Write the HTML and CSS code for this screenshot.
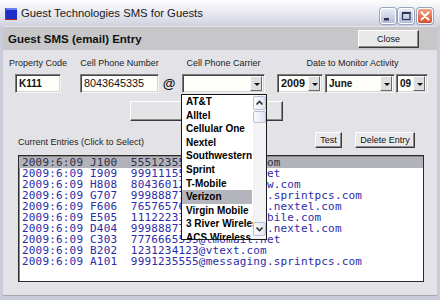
FILE: index.html
```html
<!DOCTYPE html>
<html lang="en">
<head>
  <meta charset="UTF-8" />
  <title>Guest Technologies SMS for Guests</title>
  <link rel="stylesheet" href="styles.css">
</head>
<body>
  <div class="window">
    <div class="titlebar">
      <svg class="app-icon" width="12" height="12" viewBox="0 0 12 12">
        <rect x="0" y="0" width="12" height="12" fill="#c02020"/>
        <rect x="1" y="0" width="11" height="11" fill="#1a2fc8"/>
        <rect x="1" y="0" width="11" height="2" fill="#6a7ef0"/>
      </svg>
      <span class="title">Guest Technologies SMS for Guests</span>
      <div class="caption-btns">
        <span class="cap-btn">
          <svg width="14" height="14" viewBox="0 0 14 14"><rect x="3" y="9" width="5" height="2.5" fill="#2c3450"/></svg>
        </span>
        <span class="cap-btn">
          <svg width="14" height="14" viewBox="0 0 14 14"><rect x="3.5" y="3.5" width="7.5" height="7" fill="none" stroke="#2c3450" stroke-width="1.2"/><rect x="3" y="3" width="8.5" height="2" fill="#2c3450"/></svg>
        </span>
        <span class="cap-btn cap-close">
          <svg width="14" height="14" viewBox="0 0 14 14"><path d="M3.5 3.5 L10.5 10.5 M10.5 3.5 L3.5 10.5" stroke="#fff" stroke-width="2" stroke-linecap="round"/></svg>
        </span>
      </div>
    </div>

    <div class="panel">
      <div class="header">
        <span class="header-title">Guest SMS (email) Entry</span>
        <button class="btn btn-close">Close</button>
      </div>

      <div class="fields">
        <div class="field f-code">
          <label>Property Code</label>
          <div class="input bold">K111</div>
        </div>
        <div class="field f-phone">
          <label>Cell Phone Number</label>
          <div class="input">8043645335</div>
        </div>
        <div class="at">@</div>
        <div class="field f-carrier">
          <label>Cell Phone Carrier</label>
          <div class="select"><span class="val"></span><span class="arrow"></span></div>
        </div>
        <div class="field f-date">
          <label>Date to Monitor Activity</label>
          <div class="selects">
            <div class="select s-year"><span class="val">2009</span><span class="arrow"></span></div>
            <div class="select s-month"><span class="val">June</span><span class="arrow"></span></div>
            <div class="select s-day"><span class="val">09</span><span class="arrow"></span></div>
          </div>
        </div>
      </div>

      <div class="action-row">
        <button class="btn btn-wide"></button>
      </div>

      <div class="entries-bar">
        <span class="entries-label">Current Entries (Click to Select)</span>
        <div class="entry-btns">
          <button class="btn btn-test">Test</button>
          <button class="btn btn-delete">Delete Entry</button>
        </div>
      </div>

      <div class="listbox">
        <div class="row selected">2009:6:09 J100  5551235555@qwestmp.com</div>
        <div class="row">2009:6:09 I909  9991115555@tmomail.net</div>
        <div class="row">2009:6:09 H808  8043601212@mobile.vzw.com</div>
        <div class="row">2009:6:09 G707  9998887777@messaging.sprintpcs.com</div>
        <div class="row">2009:6:09 F606  7657657657@messaging.nextel.com</div>
        <div class="row">2009:6:09 E505  1112223333@myboostmobile.com</div>
        <div class="row">2009:6:09 D404  9998887777@messaging.nextel.com</div>
        <div class="row">2009:6:09 C303  7776665555@tmomail.net</div>
        <div class="row">2009:6:09 B202  1231234123@vtext.com</div>
        <div class="row">2009:6:09 A101  9991235555@messaging.sprintpcs.com</div>
      </div>
    </div>

    <!-- open carrier list, lies over the form -->
    <div class="dropdown">
      <ul class="dd-items">
        <li>AT&amp;T</li>
        <li>Alltel</li>
        <li>Cellular One</li>
        <li>Nextel</li>
        <li>Southwestern</li>
        <li>Sprint</li>
        <li>T-Mobile</li>
        <li class="active">Verizon</li>
        <li>Virgin Mobile</li>
        <li>3 River Wireless</li>
        <li>ACS Wireless</li>
      </ul>
      <div class="dd-scroll">
        <span class="sb-btn">
          <svg width="11" height="12" viewBox="0 0 11 12"><polyline points="2.5,7.5 5.5,4.5 8.5,7.5" fill="none" stroke="#303030" stroke-width="1.6"/></svg>
        </span>
        <span class="sb-thumb"></span>
        <span class="sb-btn sb-down">
          <svg width="11" height="12" viewBox="0 0 11 12"><polyline points="2.5,4.5 5.5,7.5 8.5,4.5" fill="none" stroke="#303030" stroke-width="1.6"/></svg>
        </span>
      </div>
    </div>
  </div>
</body>
</html>
```

FILE: styles.css
```css
body {
  margin: 0;
  font-family: "Liberation Sans", Arial, sans-serif;
  background-color: #e3e3e7;
  color: #222;
}
.window {
  position: relative;
  width: 440px;
  height: 300px;
  box-sizing: border-box;
  background: #c9ccd8;
  padding: 0 3px 4px;
  display: flex;
  flex-direction: column;
}
.titlebar {
  height: 26px;
  margin: 0 -3px;
  padding: 0 7px 0 5px;
  display: flex;
  align-items: center;
  background: linear-gradient(#fdfdfe, #e6e7ee 55%, #cfd2de);
}
.app-icon {
  margin-top: 1px;
}
.title {
  margin-left: 4px;
  font-size: 11.3px;
  color: #1a1a1a;
}
.caption-btns {
  margin-left: auto;
  align-self: flex-end;
  margin-bottom: 2px;
  display: flex;
  gap: 2px;
}
.cap-btn {
  width: 14px;
  height: 14px;
  border: 1px solid #fff;
  border-radius: 3px;
  background: linear-gradient(#e9ecf8, #b3bbd8);
  box-shadow: 0 0 0 1px #9aa2c0;
  display: flex;
}
.cap-close {
  margin-left: 1px;
  background: linear-gradient(#f3a080, #d4502e);
}
.panel {
  flex: 1;
  background: #e3e3e7;
  display: flex;
  flex-direction: column;
  border-bottom: 1px solid #a4a6b4;
}
.header {
  height: 23px;
  margin-top: 1px;
  padding: 0 18px 0 5px;
  background: #c7c7c9;
  display: flex;
  align-items: center;
  justify-content: space-between;
}
.header-title {
  font-weight: bold;
  font-size: 11.5px;
  color: #111;
}
.btn {
  font-family: "Liberation Sans", Arial, sans-serif;
  font-size: 9px;
  color: #111;
  background: #e9e9ea;
  border: 1px solid;
  border-color: #fff #3a3a3a #3a3a3a #fff;
  box-shadow: inset -1px -1px #8a8a8a;
  padding: 0;
}
.btn-close {
  width: 61px;
  height: 18px;
  margin-top: 1px;
}
.fields {
  display: flex;
  align-items: flex-end;
  margin-top: 7px;
}
.field {
  display: flex;
  flex-direction: column;
  align-items: center;
}
.field label {
  font-size: 9px;
  line-height: 12px;
  margin-bottom: 5px;
  white-space: nowrap;
  color: #222;
}
.f-code { margin-left: 12px; width: 46px; }
.f-phone { margin-left: 19px; width: 79px; }
.f-carrier { margin-left: 6px; width: 83px; }
.f-date { margin-left: 12px; width: 151px; }
.at {
  margin-left: 3px;
  width: 14px;
  height: 19px;
  line-height: 19px;
  font-weight: bold;
  font-size: 13px;
  text-align: center;
  color: #111;
}
.input, .select {
  box-sizing: border-box;
  width: 100%;
  height: 19px;
  background: #fdfdf9;
  border: 1px solid;
  border-color: #7c7c7c #f4f4f4 #f4f4f4 #7c7c7c;
  box-shadow: inset 1px 1px #454545, inset -1px -1px #d6d6d6;
  font-size: 10.8px;
  line-height: 17px;
  padding-left: 3px;
  color: #111;
}
.bold {
  font-weight: bold;
  font-size: 10px;
}
.select {
  display: flex;
  align-items: center;
  padding-right: 2px;
}
.select .val {
  flex: 1;
  font-weight: bold;
  font-size: 10px;
}
.s-year .val {
  font-size: 10.8px;
}
.select .arrow {
  width: 12px;
  height: 15px;
  box-sizing: border-box;
  background: #dedee0;
  border: 1px solid;
  border-color: #fafafa #6a6a6a #6a6a6a #fafafa;
  position: relative;
}
.select .arrow::after {
  content: "";
  position: absolute;
  left: 2.5px;
  top: 5.5px;
  border-left: 3px solid transparent;
  border-right: 3px solid transparent;
  border-top: 3px solid #111;
}
.selects {
  display: flex;
  width: 100%;
}
.s-year { width: 46px; }
.s-month { width: 70px; margin-left: 2px; }
.s-day { width: 32px; margin-left: 1px; }
.action-row {
  margin-top: 8px;
  padding-left: 127px;
}
.btn-wide {
  display: block;
  width: 153px;
  height: 20px;
  background: #e4e4e6;
}
.entries-bar {
  margin-top: 11px;
  height: 16px;
  padding: 0 22px 0 15px;
  display: flex;
  align-items: center;
  justify-content: space-between;
}
.entries-label {
  font-size: 9px;
  margin-top: 4px;
}
.entry-btns {
  display: flex;
  gap: 13px;
}
.btn-test {
  width: 27px;
  height: 16px;
}
.btn-delete {
  width: 60px;
  height: 16px;
}
.listbox {
  margin: 7px 0 0 15px;
  width: 406px;
  height: 127px;
  box-sizing: border-box;
  background: #fff;
  border: 1px solid #2c2c2c;
  box-shadow: inset 1px 1px #8a8a8a;
  padding-top: 1px;
}
.row {
  height: 11px;
  line-height: 11px;
  padding-left: 3px;
  white-space: pre;
  font-family: "DejaVu Sans Mono", monospace;
  font-size: 11px;
  letter-spacing: 0.18px;
  color: #2c2ca8;
}
.row.selected {
  background: #b2b2ba;
  color: #2e2e48;
}
.dropdown {
  position: absolute;
  left: 181px;
  top: 94px;
  width: 86px;
  height: 146px;
  box-sizing: border-box;
  background: #fff;
  border: 1px solid #1a1a1a;
  display: flex;
  overflow: hidden;
}
.dd-items {
  flex: 1;
  min-width: 0;
  list-style: none;
  margin: 0;
  padding: 0;
}
.dd-items li {
  height: 13.6px;
  line-height: 13.6px;
  padding-left: 4px;
  font-weight: bold;
  font-size: 10px;
  color: #000;
  white-space: nowrap;
  overflow: hidden;
}
.dd-items li.active {
  background: #b4b4bc;
  margin-right: 1px;
}
.dd-scroll {
  width: 13px;
  background: #f3f3f5;
  display: flex;
  flex-direction: column;
  padding-top: 1px;
}
.sb-btn, .sb-thumb {
  box-sizing: border-box;
  width: 13px;
  border: 1px solid #b9c0d8;
  border-radius: 2px;
  background: linear-gradient(90deg, #fafbff, #dfe3f0);
}
.sb-btn {
  height: 14px;
  display: flex;
  align-items: center;
  justify-content: center;
}
.sb-thumb {
  height: 12px;
  margin-top: 1px;
}
.sb-down {
  margin-top: auto;
  margin-bottom: 3px;
}
```
